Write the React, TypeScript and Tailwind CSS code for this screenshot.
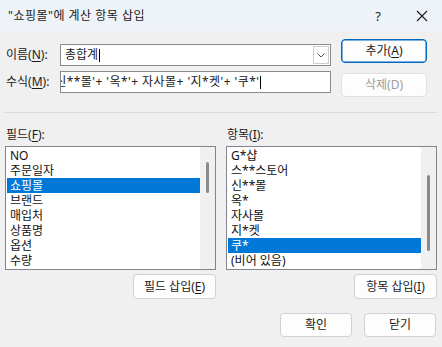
import React from "react";

const FONT = {
  fontFamily: '"Noto Sans", "Noto Sans CJK KR", sans-serif',
};

function Btn({
  children,
  w,
  h,
  primary,
  disabled,
}: {
  children: React.ReactNode;
  w: string;
  h: string;
  primary?: boolean;
  disabled?: boolean;
}) {
  return (
    <div
      className={[
        w,
        h,
        "flex items-center justify-center rounded-[4px] bg-[#fdfdfd] text-[12px] leading-[16px]",
        primary
          ? "border border-[#0067c0] shadow-[inset_0_0_0_0.5px_#0067c0]"
          : "border border-[#d1d1d1]",
        disabled ? "text-[#9d9d9d] bg-[#f9f9f9] border-[#e0e0e0]" : "text-[#1b1b1b]",
      ].join(" ")}
    >
      {children}
    </div>
  );
}

function ListBox({
  items,
  selected,
  thumbTop,
  thumbH,
}: {
  items: string[];
  selected: number;
  thumbTop: number;
  thumbH: number;
}) {
  return (
    <div className="flex h-[124px] w-[211px] border border-[#82868c] bg-white">
      <div className="flex flex-1 flex-col pt-[1px] pl-[1px]">
        {items.map((it, i) => (
          <div
            key={i}
            className={
              "h-[15px] overflow-hidden pl-[3px] text-[12px] leading-[15px] whitespace-nowrap " +
              (i === selected ? "bg-[#0078d7] text-white" : "text-[#111]")
            }
          >
            {it}
          </div>
        ))}
      </div>
      <div className="flex w-[15px] justify-center bg-[#f0f0f0]">
        <div
          className="w-[3px] rounded-[2px] bg-[#8a8a8a]"
          style={{ marginTop: thumbTop, height: thumbH }}
        />
      </div>
    </div>
  );
}

export default function App() {
  return (
    <div
      className="flex h-[347px] w-[442px] flex-col overflow-hidden bg-[#f0f0f0] text-[#1a1a1a]"
      style={FONT}
    >
      {/* title bar */}
      <div className="flex h-[31px] items-center bg-[#eef3f9] pl-[8px]">
        <div className="flex-1 text-[12px] leading-[16px] tracking-[0.5px] text-[#1b1b1b]">
          "쇼핑몰"에 계산 항목 삽입
        </div>
        <div className="flex w-[20px] justify-center text-[13px] leading-[16px]">?</div>
        <div className="ml-[28px] mr-[14px] flex h-[12px] w-[12px] items-center justify-center">
          <svg width="12" height="12" viewBox="0 0 12 12">
            <path d="M1 1 L11 11 M11 1 L1 11" stroke="#1b1b1b" strokeWidth="1.1" />
          </svg>
        </div>
      </div>

      {/* top section */}
      <div className="flex h-[81px]">
        <div className="flex flex-col gap-[5px] pt-[13px] pl-[6px]">
          <div className="flex items-center">
            <div className="w-[54px] text-[12px] leading-[16px]">
              이름(<u className="underline-offset-2">N</u>):
            </div>
            <div className="flex h-[22px] w-[271px] border border-[#8a8a8a] bg-white">
              <div className="flex flex-1 items-center pl-[4px] text-[12px] leading-[16px]">
                <span>총합계</span>
                <span className="ml-[1px] inline-block h-[13px] w-[1px] bg-black" />
              </div>
              <div className="m-[1px] flex w-[16px] items-center justify-center border border-[#cfcfcf] bg-white">
                <svg width="8" height="5" viewBox="0 0 8 5">
                  <path d="M0.5 0.5 L4 4 L7.5 0.5" fill="none" stroke="#555" strokeWidth="1" />
                </svg>
              </div>
            </div>
          </div>
          <div className="flex items-center">
            <div className="w-[54px] text-[12px] leading-[16px]">
              수식(<u className="underline-offset-2">M</u>):
            </div>
            <div className="flex h-[22px] w-[271px] items-center overflow-hidden border border-[#8a8a8a] bg-white">
              <div className="ml-[-9px] flex items-center whitespace-nowrap text-[12px] leading-[16px] tracking-[0.45px]">
                <span>'신**몰'+ '옥*'+ 자사몰+ '지*켓'+ '쿠*'</span>
                <span className="ml-[1px] inline-block h-[13px] w-[1px] bg-black" />
              </div>
            </div>
          </div>
        </div>
        <div className="ml-[10px] flex flex-col gap-[10px] pt-[8px]">
          <Btn w="w-[86px]" h="h-[24px]" primary>
            추가(<u className="underline-offset-2">A</u>)
          </Btn>
          <Btn w="w-[86px]" h="h-[24px]" disabled>
            삭제(D)
          </Btn>
        </div>
      </div>

      {/* separator */}
      <div className="mx-[5px] h-[1px] bg-[#d9d9d9]" />

      {/* lists */}
      <div className="flex gap-[10px] px-[5px]">
        <div className="flex flex-col items-end">
          <div className="mt-[14px] mb-[3px] w-full pl-[1px] text-[12px] leading-[16px]">
            필드(<u className="underline-offset-2">F</u>):
          </div>
          <ListBox
            items={["NO", "주문일자", "쇼핑몰", "브랜드", "매입처", "상품명", "옵션", "수량"]}
            selected={2}
            thumbTop={15}
            thumbH={31}
          />
          <div className="mt-[4px]">
            <Btn w="w-[83px]" h="h-[25px]">
              필드 삽입(<u className="underline-offset-2">E</u>)
            </Btn>
          </div>
        </div>
        <div className="flex flex-col items-end">
          <div className="mt-[14px] mb-[3px] w-full pl-[1px] text-[12px] leading-[16px]">
            항목(<u className="underline-offset-2">I</u>):
          </div>
          <ListBox
            items={["G*샵", "스**스토어", "신**몰", "옥*", "자사몰", "지*켓", "쿠*", "(비어 있음)"]}
            selected={6}
            thumbTop={28}
            thumbH={76}
          />
          <div className="mt-[4px]">
            <Btn w="w-[83px]" h="h-[25px]">
              항목 삽입(<u className="underline-offset-2">I</u>)
            </Btn>
          </div>
          <div className="mt-[14px] mr-[1px] flex gap-[12px]">
            <Btn w="w-[72px]" h="h-[24px]">
              확인
            </Btn>
            <Btn w="w-[72px]" h="h-[24px]">
              닫기
            </Btn>
          </div>
        </div>
      </div>
    </div>
  );
}
